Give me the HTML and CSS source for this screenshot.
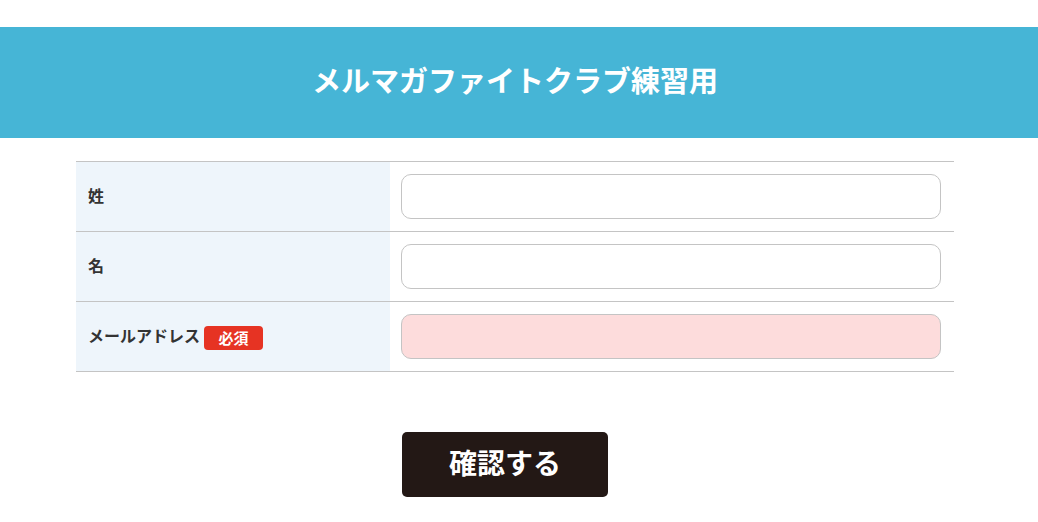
FILE: index.html
```html
<!DOCTYPE html>
<html lang="ja">
<head>
<meta charset="utf-8">
<title>メルマガファイトクラブ練習用</title>
<link rel="stylesheet" href="styles.css">
</head>
<body>
<div class="page">
  <header class="hero">
    <h1 class="hero-title">メルマガファイトクラブ練習用</h1>
  </header>
  <form class="form">
    <div class="row">
      <div class="label">姓</div>
      <div class="field"><input class="input" type="text"></div>
    </div>
    <div class="row">
      <div class="label">名</div>
      <div class="field"><input class="input" type="text"></div>
    </div>
    <div class="row">
      <div class="label">メールアドレス<span class="badge">必須</span></div>
      <div class="field"><input class="input input-required" type="email"></div>
    </div>
    <div class="actions">
      <div></div>
      <div class="actions-cell"><button class="submit" type="button">確認する</button></div>
    </div>
  </form>
</div>
</body>
</html>
```

FILE: styles.css
```css
* { box-sizing: border-box; }
html, body { margin: 0; padding: 0; background: #fff; }
body {
  font-family: "Noto Sans CJK JP", "Noto Sans", sans-serif;
  color: #333;
}
.page { width: 1030px; }
.hero {
  margin-top: 27px;
  width: 1038px;
  height: 111px;
  background: #46b5d6;
  display: flex;
  align-items: center;
  justify-content: flex-start;
}
.hero-title {
  margin: 0 0 7px 0;
  width: 1030px;
  text-align: center;
  color: #fff;
  font-size: 29px;
  font-weight: 700;
  line-height: 1;
}
.form {
  width: 878px;
  margin: 23px auto 0;
}
.row {
  display: grid;
  grid-template-columns: 314px 1fr;
  border-top: 1px solid #c4c4c4;
}
.row:nth-child(3) { border-bottom: 1px solid #c4c4c4; }
.label {
  background: #eef5fb;
  display: flex;
  align-items: center;
  padding: 0 0 3px 12px;
  font-size: 16px;
  font-weight: 700;
  color: #333;
}
.badge {
  display: inline-flex;
  align-items: center;
  justify-content: center;
  margin: 6px 0 0 4px;
  width: 59px;
  height: 24px;
  border-radius: 4px;
  background: #e63323;
  color: #fff;
  font-size: 15px;
  font-weight: 700;
  line-height: 1;
  padding-bottom: 1px;
}
.field {
  padding: 12px 13px 12px 11px;
  display: flex;
}
.input {
  width: 100%;
  height: 45px;
  border: 1px solid #c4c4c4;
  border-radius: 10px;
  background: #fff;
  font: inherit;
  outline: none;
}
.input-required { background: #fddcdc; }
.actions {
  display: grid;
  grid-template-columns: 314px 1fr;
  padding-top: 60px;
}
.actions-cell { padding-left: 12px; }
.submit {
  width: 206px;
  height: 65px;
  border: 0;
  border-radius: 5px;
  background: #231815;
  color: #fff;
  font-family: "Noto Sans CJK JP", "Noto Sans", sans-serif;
  font-size: 28px;
  font-weight: 700;
  cursor: pointer;
  padding: 0 0 5px 0;
}
```
